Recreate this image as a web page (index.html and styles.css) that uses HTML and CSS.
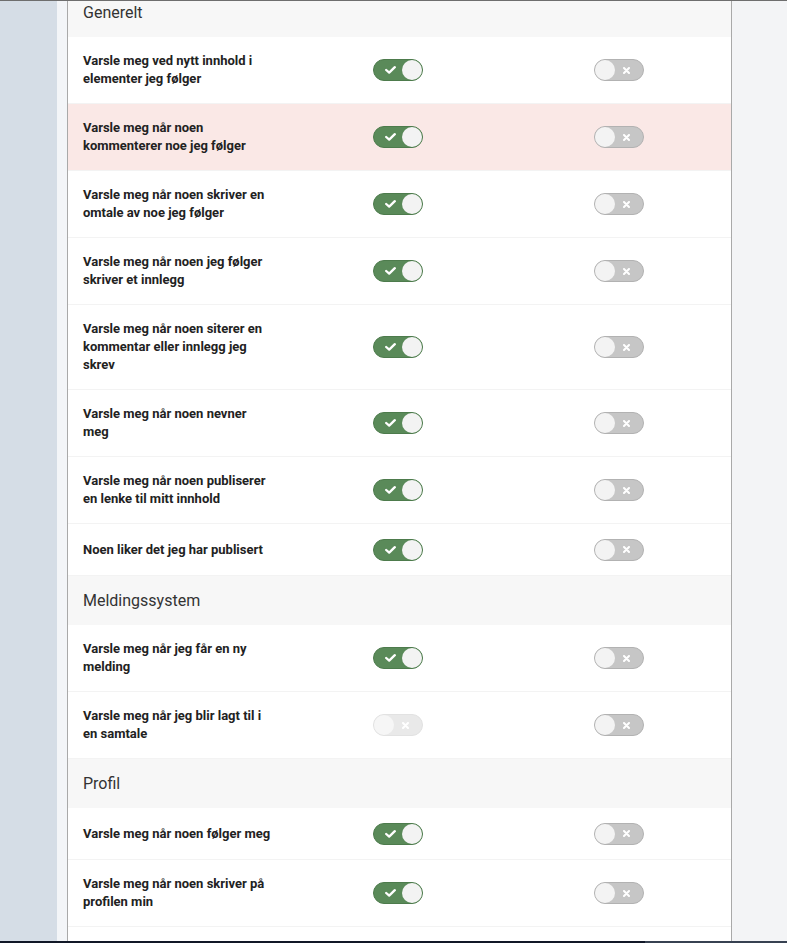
FILE: index.html
```html
<!DOCTYPE html>
<html lang="no">
<head>
<meta charset="utf-8">
<title>Varsler</title>
<link rel="stylesheet" href="styles.css">
</head>
<body>
<div class="topline"></div>
<div class="app">
  <div class="sidebar"></div>
  <div class="gutter"></div>
  <main class="panel">
    <div class="scroll">
      <div class="section-head">Generelt</div>
      <div class="row"><div class="label">Varsle meg ved nytt innhold i elementer jeg følger</div>
        <div class="cell"><span class="tg on"><svg class="ic" viewBox="0 0 11 8"><path d="M1.2 4 L4.2 6.6 L9.8 1.2"/></svg><span class="knob"></span></span></div>
        <div class="cell"><span class="tg off"><span class="knob"></span><svg class="ic" viewBox="0 0 7 7"><path d="M1 1 L6 6 M6 1 L1 6"/></svg></span></div></div>
      <div class="row hl"><div class="label">Varsle meg når noen kommenterer noe jeg følger</div>
        <div class="cell"><span class="tg on"><svg class="ic" viewBox="0 0 11 8"><path d="M1.2 4 L4.2 6.6 L9.8 1.2"/></svg><span class="knob"></span></span></div>
        <div class="cell"><span class="tg off"><span class="knob"></span><svg class="ic" viewBox="0 0 7 7"><path d="M1 1 L6 6 M6 1 L1 6"/></svg></span></div></div>
      <div class="row"><div class="label">Varsle meg når noen skriver en omtale av noe jeg følger</div>
        <div class="cell"><span class="tg on"><svg class="ic" viewBox="0 0 11 8"><path d="M1.2 4 L4.2 6.6 L9.8 1.2"/></svg><span class="knob"></span></span></div>
        <div class="cell"><span class="tg off"><span class="knob"></span><svg class="ic" viewBox="0 0 7 7"><path d="M1 1 L6 6 M6 1 L1 6"/></svg></span></div></div>
      <div class="row"><div class="label">Varsle meg når noen jeg følger skriver et innlegg</div>
        <div class="cell"><span class="tg on"><svg class="ic" viewBox="0 0 11 8"><path d="M1.2 4 L4.2 6.6 L9.8 1.2"/></svg><span class="knob"></span></span></div>
        <div class="cell"><span class="tg off"><span class="knob"></span><svg class="ic" viewBox="0 0 7 7"><path d="M1 1 L6 6 M6 1 L1 6"/></svg></span></div></div>
      <div class="row"><div class="label">Varsle meg når noen siterer en kommentar eller innlegg jeg skrev</div>
        <div class="cell"><span class="tg on"><svg class="ic" viewBox="0 0 11 8"><path d="M1.2 4 L4.2 6.6 L9.8 1.2"/></svg><span class="knob"></span></span></div>
        <div class="cell"><span class="tg off"><span class="knob"></span><svg class="ic" viewBox="0 0 7 7"><path d="M1 1 L6 6 M6 1 L1 6"/></svg></span></div></div>
      <div class="row"><div class="label">Varsle meg når noen nevner meg</div>
        <div class="cell"><span class="tg on"><svg class="ic" viewBox="0 0 11 8"><path d="M1.2 4 L4.2 6.6 L9.8 1.2"/></svg><span class="knob"></span></span></div>
        <div class="cell"><span class="tg off"><span class="knob"></span><svg class="ic" viewBox="0 0 7 7"><path d="M1 1 L6 6 M6 1 L1 6"/></svg></span></div></div>
      <div class="row"><div class="label">Varsle meg når noen publiserer en lenke til mitt innhold</div>
        <div class="cell"><span class="tg on"><svg class="ic" viewBox="0 0 11 8"><path d="M1.2 4 L4.2 6.6 L9.8 1.2"/></svg><span class="knob"></span></span></div>
        <div class="cell"><span class="tg off"><span class="knob"></span><svg class="ic" viewBox="0 0 7 7"><path d="M1 1 L6 6 M6 1 L1 6"/></svg></span></div></div>
      <div class="row"><div class="label">Noen liker det jeg har publisert</div>
        <div class="cell"><span class="tg on"><svg class="ic" viewBox="0 0 11 8"><path d="M1.2 4 L4.2 6.6 L9.8 1.2"/></svg><span class="knob"></span></span></div>
        <div class="cell"><span class="tg off"><span class="knob"></span><svg class="ic" viewBox="0 0 7 7"><path d="M1 1 L6 6 M6 1 L1 6"/></svg></span></div></div>
      <div class="section-head">Meldingssystem</div>
      <div class="row"><div class="label">Varsle meg når jeg får en ny melding</div>
        <div class="cell"><span class="tg on"><svg class="ic" viewBox="0 0 11 8"><path d="M1.2 4 L4.2 6.6 L9.8 1.2"/></svg><span class="knob"></span></span></div>
        <div class="cell"><span class="tg off"><span class="knob"></span><svg class="ic" viewBox="0 0 7 7"><path d="M1 1 L6 6 M6 1 L1 6"/></svg></span></div></div>
      <div class="row"><div class="label">Varsle meg når jeg blir lagt til i en samtale</div>
        <div class="cell"><span class="tg off disabled"><span class="knob"></span><svg class="ic" viewBox="0 0 7 7"><path d="M1 1 L6 6 M6 1 L1 6"/></svg></span></div>
        <div class="cell"><span class="tg off"><span class="knob"></span><svg class="ic" viewBox="0 0 7 7"><path d="M1 1 L6 6 M6 1 L1 6"/></svg></span></div></div>
      <div class="section-head">Profil</div>
      <div class="row"><div class="label">Varsle meg når noen følger meg</div>
        <div class="cell"><span class="tg on"><svg class="ic" viewBox="0 0 11 8"><path d="M1.2 4 L4.2 6.6 L9.8 1.2"/></svg><span class="knob"></span></span></div>
        <div class="cell"><span class="tg off"><span class="knob"></span><svg class="ic" viewBox="0 0 7 7"><path d="M1 1 L6 6 M6 1 L1 6"/></svg></span></div></div>
      <div class="row"><div class="label">Varsle meg når noen skriver på profilen min</div>
        <div class="cell"><span class="tg on"><svg class="ic" viewBox="0 0 11 8"><path d="M1.2 4 L4.2 6.6 L9.8 1.2"/></svg><span class="knob"></span></span></div>
        <div class="cell"><span class="tg off"><span class="knob"></span><svg class="ic" viewBox="0 0 7 7"><path d="M1 1 L6 6 M6 1 L1 6"/></svg></span></div></div>
    </div>
  </main>
  <div class="rightfill"></div>
</div>
<div class="bottombar"><div class="bb-left"></div><div class="bb-right"></div></div>
</body>
</html>
```
FILE: styles.css
```css
html, body {
  margin: 0;
  padding: 0;
  height: 943px;
  overflow: hidden;
  font-family: Roboto, "Liberation Sans", Arial, sans-serif;
  background: #f3f4f6;
}
.topline {
  height: 1px;
  background: #6e6e6e;
}
.app {
  display: flex;
  height: 940px;
  overflow: hidden;
}
.sidebar {
  width: 57px;
  flex: none;
  background: #d5dde6;
}
.gutter {
  width: 10px;
  flex: none;
  background: #f3f5f8;
}
.panel {
  width: 663px;
  flex: none;
  background: #fff;
  border-left: 1px solid #a9a9a9;
  border-right: 1px solid #a9a9a9;
  overflow: hidden;
}
.rightfill {
  flex: 1;
  background: #f3f4f6;
}
.scroll {
  margin-top: -13px;
}
.section-head {
  height: 49px;
  line-height: 49px;
  padding-left: 15px;
  background: #f7f7f7;
  color: #333;
  font-size: 16px;
}
.row {
  display: grid;
  grid-template-columns: 290px 221px 1fr;
  align-items: center;
  padding: 15px 0;
  border-bottom: 1px solid #f3f3f3;
  background: #fff;
}
.row.hl {
  background: #fae8e6;
}
.label {
  padding-left: 15px;
  width: 190px;
  font-size: 13px;
  line-height: 18px;
  font-weight: 700;
  color: #222;
}
.cell {
  padding-left: 15px;
  height: 21px;
  display: flex;
  align-items: center;
}
.tg {
  display: flex;
  align-items: center;
  justify-content: space-between;
  box-sizing: border-box;
  width: 50px;
  height: 22px;
  flex: none;
  border-radius: 11px;
  border: 1px solid;
}
.knob {
  width: 20px;
  height: 20px;
  border-radius: 50%;
  background: #f3f3f3;
  flex: none;
}
.ic {
  display: block;
  fill: none;
  stroke: #fff;
  stroke-linecap: round;
  stroke-linejoin: round;
}
.tg.on {
  background: #5a8a59;
  border-color: #4d7b4c;
  padding-left: 11px;
}
.tg.on .ic {
  width: 11px;
  height: 8px;
  stroke-width: 2.3;
}
.tg.off {
  background: #c6c6c6;
  border-color: #b2b2b2;
  padding-right: 13px;
}
.tg.off .ic {
  width: 7px;
  height: 7px;
  stroke-width: 2;
}
.tg.off.disabled {
  background: #e9e9e9;
  border-color: #e2e2e2;
}
.tg.off.disabled .knob {
  background: #f6f6f6;
}
.bottombar {
  display: flex;
  height: 2px;
}
.bb-left {
  width: 645px;
  background: #111827;
}
.bb-right {
  flex: 1;
  background: #374151;
}
```
